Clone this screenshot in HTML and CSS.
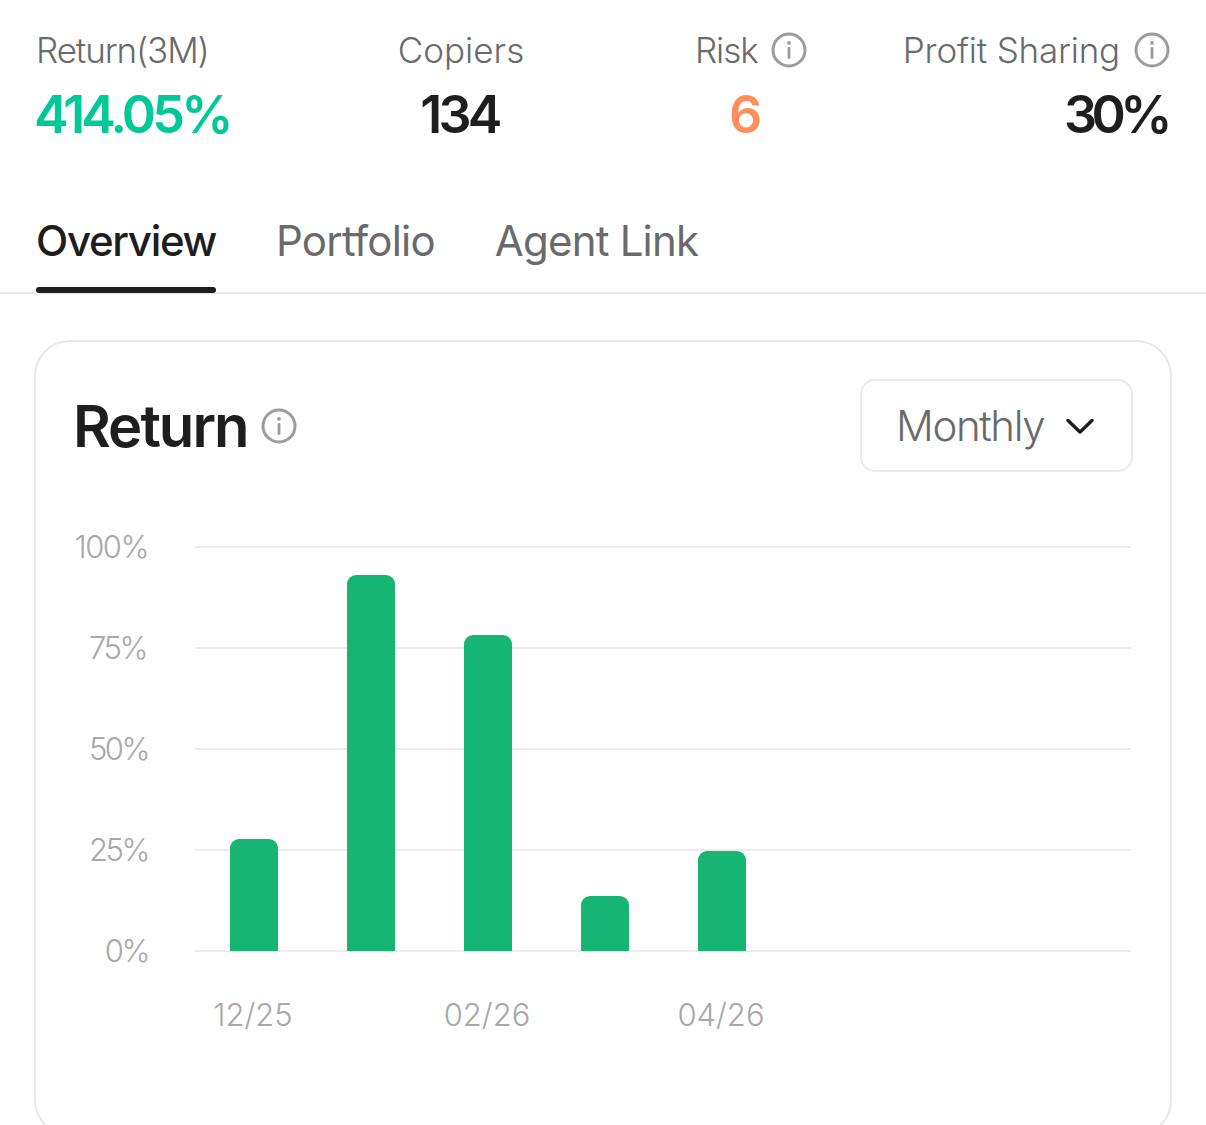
FILE: index.html
```html
<!DOCTYPE html>
<html lang="en">
<head>
<meta charset="utf-8">
<title>Return</title>
<link rel="stylesheet" href="styles.css">
</head>
<body>
<svg class="defs" width="0" height="0" aria-hidden="true">
  <symbol id="info" viewBox="0 0 36 36">
    <circle cx="18" cy="18" r="16" fill="none" stroke="#9c9c9c" stroke-width="3"/>
    <circle cx="18" cy="10.8" r="1.9" fill="#9c9c9c"/>
    <rect x="16.6" y="15" width="2.8" height="12" rx="1.2" fill="#9c9c9c"/>
  </symbol>
</svg>
<main class="page">
  <section class="stats">
    <div class="stat stat-return">
      <div class="stat-label">Return(3M)</div>
      <div class="stat-value value-green">414.05%</div>
    </div>
    <div class="stat stat-copiers">
      <div class="stat-label">Copiers</div>
      <div class="stat-value">134</div>
    </div>
    <div class="stat stat-risk">
      <div class="stat-label">Risk <svg class="info"><use href="#info"/></svg></div>
      <div class="stat-value value-orange">6</div>
    </div>
    <div class="stat stat-profit">
      <div class="stat-label">Profit Sharing <svg class="info"><use href="#info"/></svg></div>
      <div class="stat-value">30%</div>
    </div>
  </section>

  <nav class="tabs">
    <a class="tab tab-active">Overview</a>
    <a class="tab">Portfolio</a>
    <a class="tab">Agent Link</a>
  </nav>

  <section class="card">
    <header class="card-head">
      <div class="card-title">
        <h2>Return</h2>
        <svg class="info"><use href="#info"/></svg>
      </div>
      <button class="select">Monthly
        <svg class="chevron" viewBox="0 0 28 16"><path d="M2 2.5 14 14 26 2.5" fill="none" stroke="#1e1e1e" stroke-width="3.4" stroke-linecap="round" stroke-linejoin="round"/></svg>
      </button>
    </header>

    <div class="chart">
      <div class="y-axis">
        <span class="y-100">100%</span><span class="y-75">75%</span><span>50%</span><span>25%</span><span>0%</span>
      </div>
      <div class="plot">
        <div class="grid"><i></i><i></i><i></i><i></i><i></i></div>
        <div class="bars">
          <div class="bar" style="height:112px"></div>
          <div class="bar" style="height:376px"></div>
          <div class="bar" style="height:316px"></div>
          <div class="bar" style="height:55px"></div>
          <div class="bar" style="height:100px"></div>
        </div>
      </div>
    </div>
    <div class="x-axis"><span>12/25</span><span>02/26</span><span>04/26</span></div>
  </section>
</main>
</body>
</html>
```
FILE: styles.css
```css
html, body {
  margin: 0;
  height: 1125px;
  overflow: hidden;
  background: #fff;
}
body {
  font-family: "Inter", "Liberation Sans", sans-serif;
  color: #1e1e1e;
}
.defs { position: absolute; }
.page { padding-top: 28px; }

.stats {
  display: grid;
  grid-template-columns: 362px 298px 208px 266px;
  padding-left: 36px;
}
.stat { display: flex; flex-direction: column; }
.stat-copiers { width: 126px; align-items: center; }
.stat-risk { width: 111px; }
.stat-profit { align-items: flex-end; }
.stat-label {
  display: flex;
  align-items: center;
  gap: 14px;
  height: 44px;
  font-size: 35px;
  font-weight: 300;
  letter-spacing: -1.1px;
  color: #6a6a6a;
  white-space: nowrap;
}
.stat-copiers .stat-label { letter-spacing: 0; }
.stat-risk .stat-label { gap: 13px; margin-left: -1px; }
.stat-profit .stat-label { letter-spacing: -0.2px; }
.stat-value {
  margin-top: 12px;
  height: 62px;
  line-height: 62px;
  font-size: 52px;
  font-weight: 600;
  letter-spacing: -3.8px;
  white-space: nowrap;
}
.stat-return .stat-value { margin-left: -2px; }
.stat-copiers .stat-value { margin-left: -3px; }
.stat-risk .stat-value { padding-left: 33px; }
.stat-profit .stat-value { letter-spacing: -5.5px; margin-right: 3px; }
.value-green { color: #00c896; }
.value-orange { color: #ff8f5c; }
.info { width: 36px; height: 36px; flex: none; }

.tabs {
  display: flex;
  gap: 60px;
  margin-top: 59px;
  padding: 0 36px;
  height: 87px;
  border-bottom: 2px solid #e8e8e8;
}
.tab {
  height: 87px;
  line-height: 72px;
  font-size: 42px;
  font-weight: 400;
  letter-spacing: -0.8px;
  color: #6a6a6a;
  white-space: nowrap;
}
.tab-active {
  position: relative;
  font-weight: 500;
  letter-spacing: -1.32px;
  color: #1e1e1e;
}
.tab-active::after {
  content: "";
  position: absolute;
  left: 0;
  right: 0;
  bottom: -1px;
  height: 6px;
  border-radius: 3px;
  background: #1e1e1e;
}

.card {
  box-sizing: border-box;
  margin: 46px 34px 0;
  height: 796px;
  padding: 37px 38px 0 37px;
  border: 2px solid #e8e8e8;
  border-radius: 36px;
}
.card-head {
  display: flex;
  justify-content: space-between;
  align-items: center;
}
.card-title { display: flex; align-items: center; gap: 14px; }
.card-title h2 {
  margin: 0;
  font-size: 58px;
  font-weight: 600;
  letter-spacing: -2px;
}
.select {
  box-sizing: border-box;
  display: flex;
  align-items: center;
  gap: 22px;
  width: 273px;
  height: 93px;
  margin-right: -1px;
  padding: 0 0 0 34px;
  background: #fff;
  border: 2px solid #ebebeb;
  border-radius: 15px;
  font-family: "Inter", sans-serif;
  font-size: 42px;
  font-weight: 300;
  letter-spacing: -1.4px;
  color: #6a6a6a;
}
.chevron { width: 28px; height: 16px; flex: none; }

.chart {
  display: flex;
  margin-top: 74px;
  margin-right: 1px;
}
.y-axis {
  flex: none;
  width: 75px;
  height: 406px;
  margin-right: 47px;
  display: flex;
  flex-direction: column;
  justify-content: space-between;
  align-items: flex-end;
  font-size: 31px;
  font-weight: 300;
  letter-spacing: -2.5px;
  color: #a8a8a8;
  line-height: 2px;
}
.y-100 { letter-spacing: -1.5px; }
.y-75 { padding-right: 2px; }
.plot { position: relative; flex: 1; height: 406px; }
.grid {
  height: 100%;
  display: flex;
  flex-direction: column;
  justify-content: space-between;
}
.grid i { display: block; height: 2px; background: #ececec; }
.bars {
  position: absolute;
  left: 34.5px;
  bottom: 1px;
  display: flex;
  align-items: flex-end;
  gap: 69px;
}
.bar {
  width: 48px;
  background: #16b574;
  border-radius: 9px 9px 0 0;
}
.x-axis {
  height: 40px;
  margin-top: 44px;
  display: flex;
  padding-left: 63px;
  font-size: 31px;
  font-weight: 300;
  letter-spacing: 0;
  color: #a8a8a8;
}
.x-axis span { width: 234px; text-align: center; flex: none; }
```
